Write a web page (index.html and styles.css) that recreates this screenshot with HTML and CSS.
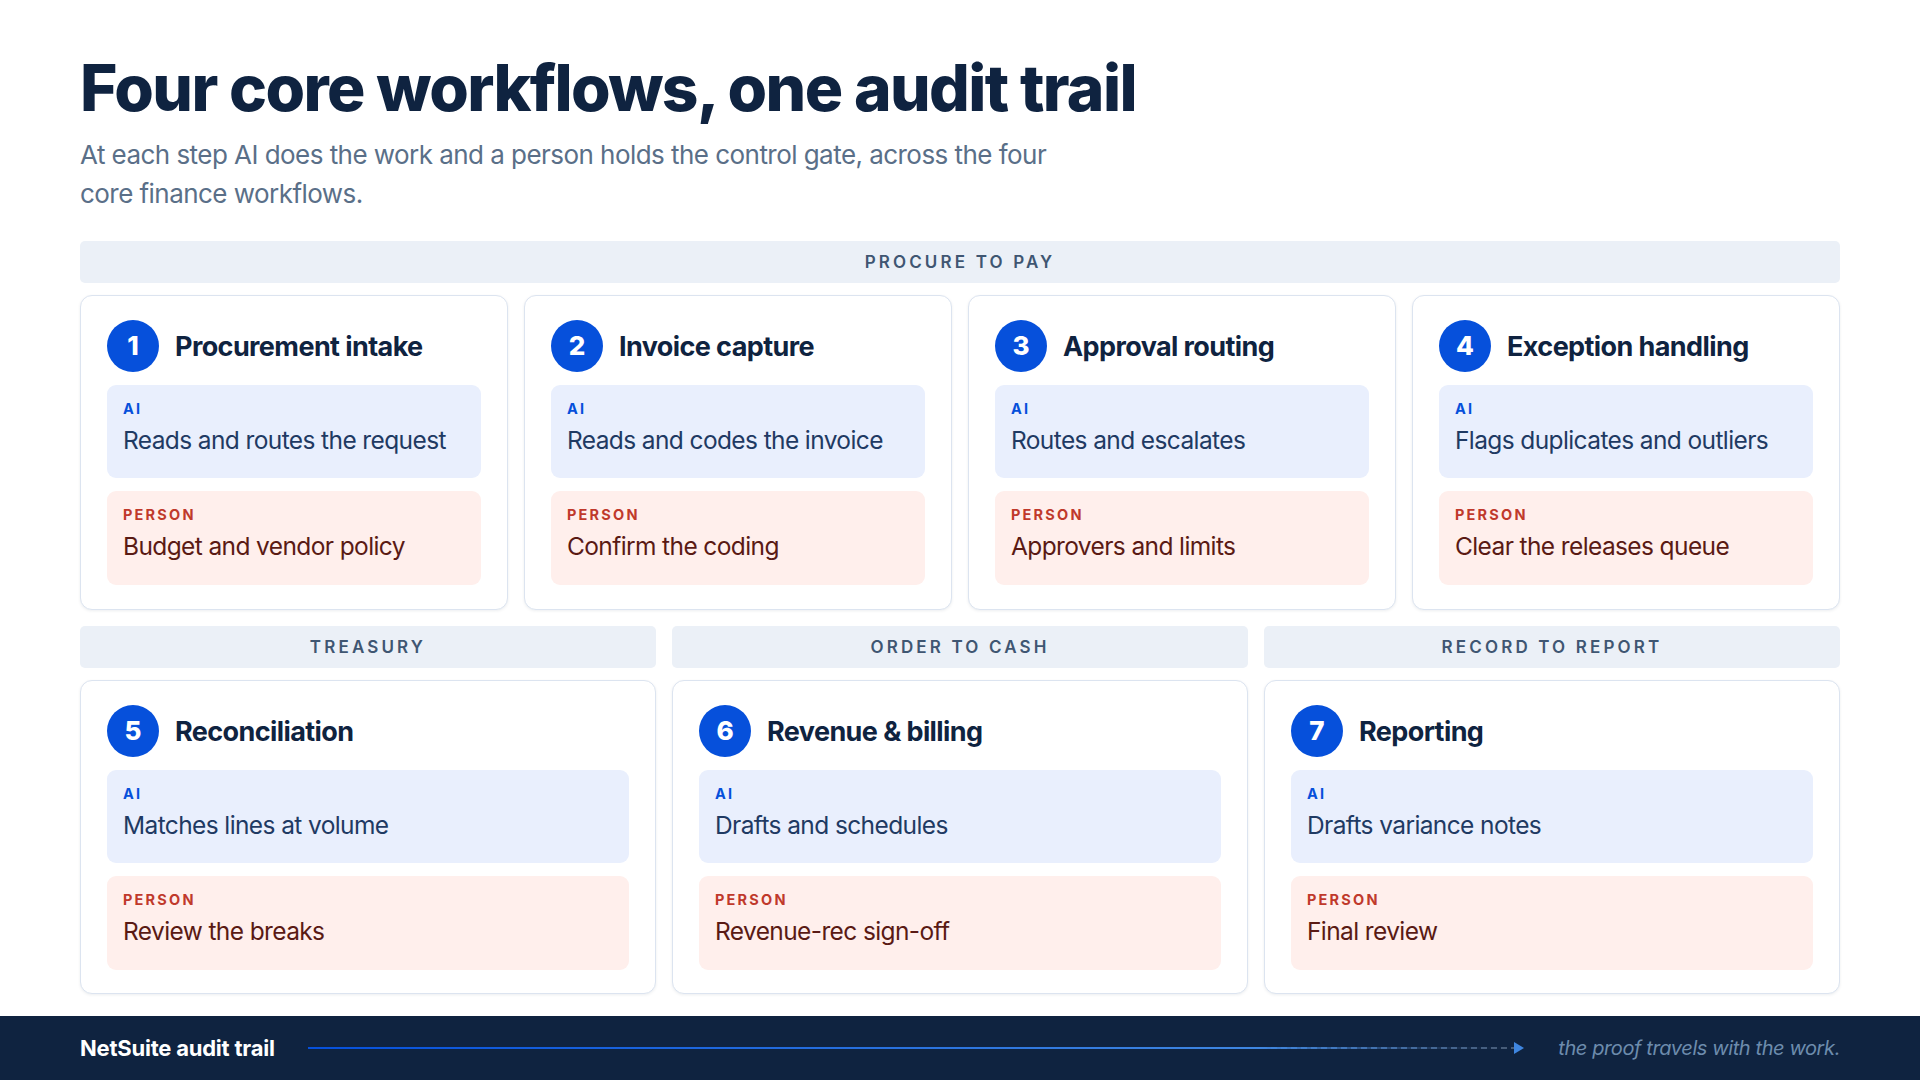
FILE: index.html
```html
<!DOCTYPE html>
<html lang="en">
<head>
    <meta charset="UTF-8">
    <title>Four core workflows, one audit trail</title>
    <link rel="stylesheet" href="styles.css">
</head>
<body>
    <main class="content">
        <h1>Four core workflows, one audit trail</h1>
        <p class="lead">At each step AI does the work and a person holds the control gate, across the four core finance workflows.</p>

        <section class="lane">
            <div class="band">PROCURE TO PAY</div>
            <div class="cards-four">
                <article class="card">
                    <div class="card-head"><span class="badge">1</span><h2>Procurement intake</h2></div>
                    <div class="box box-ai"><span class="tag">AI</span><p>Reads and routes the request</p></div>
                    <div class="box box-person"><span class="tag">PERSON</span><p>Budget and vendor policy</p></div>
                </article>
                <article class="card">
                    <div class="card-head"><span class="badge">2</span><h2>Invoice capture</h2></div>
                    <div class="box box-ai"><span class="tag">AI</span><p>Reads and codes the invoice</p></div>
                    <div class="box box-person"><span class="tag">PERSON</span><p>Confirm the coding</p></div>
                </article>
                <article class="card">
                    <div class="card-head"><span class="badge">3</span><h2>Approval routing</h2></div>
                    <div class="box box-ai"><span class="tag">AI</span><p>Routes and escalates</p></div>
                    <div class="box box-person"><span class="tag">PERSON</span><p>Approvers and limits</p></div>
                </article>
                <article class="card">
                    <div class="card-head"><span class="badge">4</span><h2>Exception handling</h2></div>
                    <div class="box box-ai"><span class="tag">AI</span><p>Flags duplicates and outliers</p></div>
                    <div class="box box-person"><span class="tag">PERSON</span><p>Clear the releases queue</p></div>
                </article>
            </div>
        </section>

        <div class="cards-three">
            <section class="lane">
                <div class="band">TREASURY</div>
                <article class="card">
                    <div class="card-head"><span class="badge">5</span><h2>Reconciliation</h2></div>
                    <div class="box box-ai"><span class="tag">AI</span><p>Matches lines at volume</p></div>
                    <div class="box box-person"><span class="tag">PERSON</span><p>Review the breaks</p></div>
                </article>
            </section>
            <section class="lane">
                <div class="band">ORDER TO CASH</div>
                <article class="card">
                    <div class="card-head"><span class="badge">6</span><h2>Revenue &amp; billing</h2></div>
                    <div class="box box-ai"><span class="tag">AI</span><p>Drafts and schedules</p></div>
                    <div class="box box-person"><span class="tag">PERSON</span><p>Revenue-rec sign-off</p></div>
                </article>
            </section>
            <section class="lane">
                <div class="band">RECORD TO REPORT</div>
                <article class="card">
                    <div class="card-head"><span class="badge">7</span><h2>Reporting</h2></div>
                    <div class="box box-ai"><span class="tag">AI</span><p>Drafts variance notes</p></div>
                    <div class="box box-person"><span class="tag">PERSON</span><p>Final review</p></div>
                </article>
            </section>
        </div>
    </main>

    <footer class="footer">
        <strong class="footer-title">NetSuite audit trail</strong>
        <div class="trail">
            <span class="trail-solid"></span>
            <span class="trail-dash"></span>
            <span class="trail-arrow"></span>
        </div>
        <em class="footer-note">the proof travels with the work.</em>
    </footer>
</body>
</html>
```

FILE: styles.css
```css
* {
    box-sizing: border-box;
}

html, body {
    margin: 0;
    padding: 0;
}

body {
    width: 1920px;
    height: 1080px;
    overflow: hidden;
    display: flex;
    flex-direction: column;
    background: #fff;
    color: #0f2340;
    font-family: Inter, "Noto Sans", sans-serif;
}

.content {
    flex: 1;
    padding: 48px 80px 0;
}

h1 {
    margin: 0;
    font-size: 64px;
    line-height: 80px;
    font-weight: 800;
    letter-spacing: -0.025em;
}

.lead {
    width: 1000px;
    margin: 7px 0 28px;
    font-size: 26px;
    line-height: 39px;
    color: #5a6f88;
    letter-spacing: -0.021em;
}

.band {
    height: 42px;
    margin-bottom: 12px;
    border-radius: 5px;
    background: #ebf0f7;
    color: #3f5672;
    font-size: 17px;
    font-weight: 600;
    line-height: 43px;
    letter-spacing: 3.15px;
    text-align: center;
}

.cards-four {
    display: grid;
    grid-template-columns: repeat(4, 1fr);
    gap: 16px;
}

.cards-three {
    display: grid;
    grid-template-columns: repeat(3, 1fr);
    gap: 16px;
    margin-top: 16px;
}

.card {
    height: 315px;
    padding: 24px 26px;
    border: 1px solid #dce4f0;
    border-radius: 12px;
    background: #fff;
    box-shadow: 0 1px 3px rgba(15, 35, 64, 0.08);
}

.cards-three .card {
    height: 314px;
}

.card-head {
    display: flex;
    align-items: center;
    gap: 16px;
    margin-bottom: 13px;
}

.badge {
    flex: none;
    width: 52px;
    height: 52px;
    border-radius: 50%;
    background: #0650db;
    color: #fff;
    font-size: 26px;
    font-weight: 800;
    line-height: 52px;
    text-align: center;
}

h2 {
    margin: 0;
    font-size: 27px;
    font-weight: 650;
    letter-spacing: -0.022em;
}

.box {
    height: 93px;
    padding: 14px 16px 0;
    border-radius: 9px;
}

.box + .box {
    height: 94px;
    margin-top: 13px;
}

.box p {
    margin: 4px 0 0;
    font-size: 24.5px;
    line-height: 34px;
    letter-spacing: -0.025em;
}

.tag {
    display: block;
    font-size: 14.5px;
    font-weight: 700;
    line-height: 20px;
    letter-spacing: 2.2px;
}

.box-ai {
    background: #e9effd;
    color: #1f3a63;
}

.box-ai .tag {
    color: #0650db;
}

.box-person {
    background: #ffefec;
    color: #5a1a14;
}

.box-person .tag {
    color: #c0392b;
}

.footer {
    flex: none;
    height: 64px;
    display: flex;
    align-items: center;
    padding: 0 80px;
    background: #0f2340;
}

.footer-title {
    margin-right: 33px;
    color: #fff;
    font-size: 22px;
    font-weight: 700;
    letter-spacing: -0.01em;
}

.trail {
    flex: 1;
    display: flex;
    align-items: center;
}

.trail-solid {
    flex: 1;
    height: 2px;
    background: linear-gradient(90deg, #0650db, #3f86e0);
}

/* dashes fade in along the line, the gaps start out barely visible */
.trail-dash {
    flex: none;
    position: relative;
    width: 253px;
    height: 2px;
    background: linear-gradient(90deg, #3f86e0, #475a74);
}

.trail-dash::after {
    content: "";
    position: absolute;
    inset: 0;
    background: repeating-linear-gradient(90deg, transparent 0 6px, #0f2340 6px 10px);
    mask-image: linear-gradient(90deg, transparent, #000);
}

.trail-arrow {
    flex: none;
    width: 0;
    height: 0;
    border-left: 10px solid #3f86e0;
    border-top: 6px solid transparent;
    border-bottom: 6px solid transparent;
}

.footer-note {
    flex: none;
    margin-left: 34px;
    color: #6d8cad;
    font-size: 20px;
    letter-spacing: -0.02em;
}
```
